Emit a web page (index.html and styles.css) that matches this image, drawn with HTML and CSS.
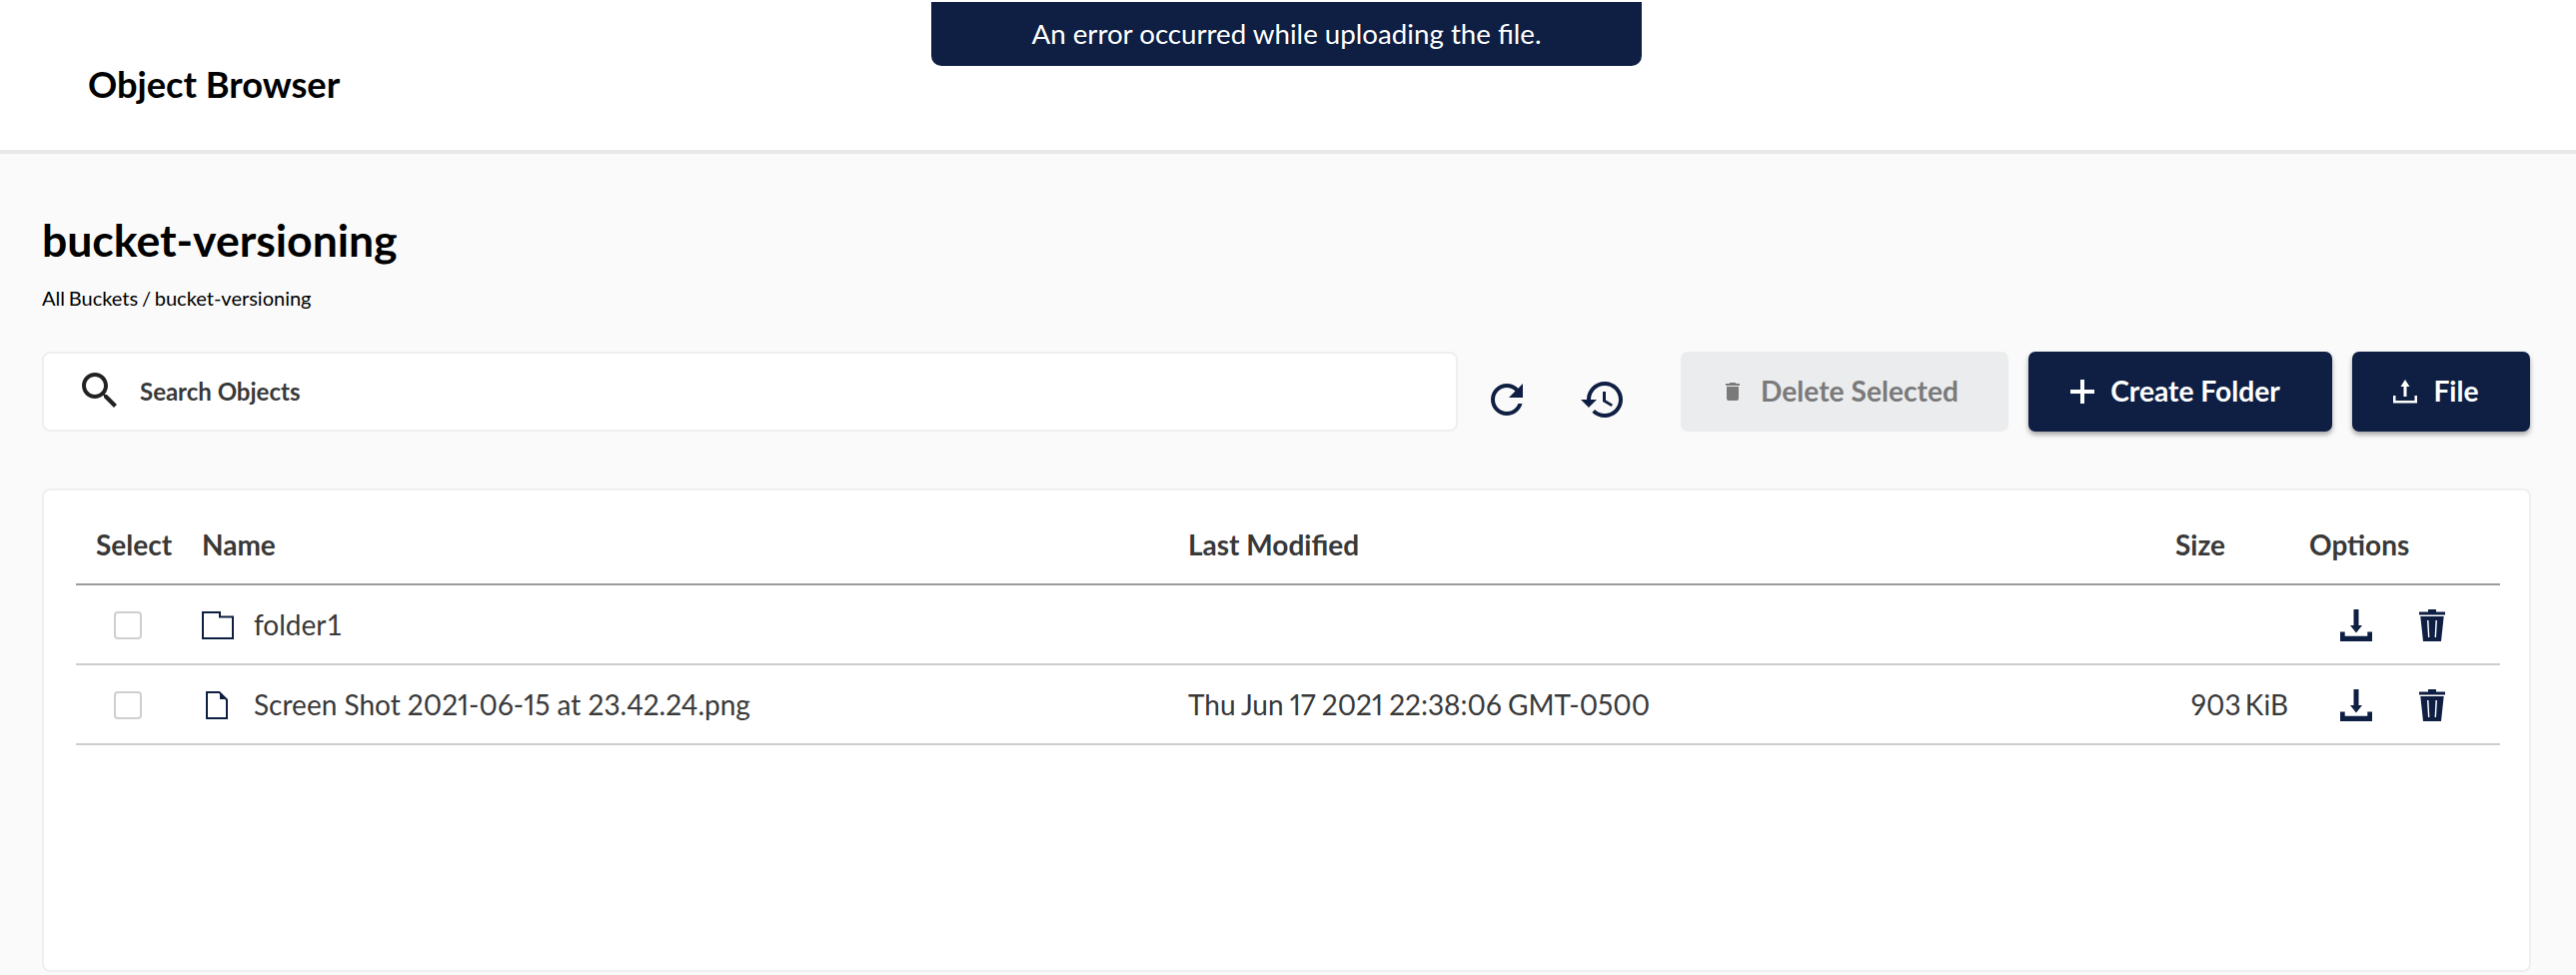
FILE: index.html
```html
<!DOCTYPE html>
<html lang="en">
<head>
    <meta charset="UTF-8">
    <meta name="viewport" content="width=device-width, initial-scale=1.0">
    <title>Object Browser</title>
    <link rel="stylesheet" href="styles.css">
</head>
<body>
    <div class="toast">An error occurred while uploading the file.</div>

    <header class="top-bar">
        <h2 class="page-name">Object Browser</h2>
    </header>

    <main class="content">
        <h1 class="bucket-name">bucket-versioning</h1>
        <div class="breadcrumb">All Buckets / bucket-versioning</div>

        <div class="actions">
            <div class="search">
                <svg class="search-icon" viewBox="0 0 24 24"><path d="M15.5 14h-.79l-.28-.27C15.41 12.59 16 11.11 16 9.5 16 5.91 13.09 3 9.5 3S3 5.91 3 9.5 5.91 16 9.5 16c1.61 0 3.09-.59 4.23-1.57l.27.28v.79l5 4.99L20.49 19l-4.99-5zm-6 0C7.01 14 5 11.99 5 9.5S7.01 5 9.5 5 14 7.01 14 9.5 11.99 14 9.5 14z"/></svg>
                <span>Search Objects</span>
            </div>
            <button class="icon-btn refresh">
                <svg viewBox="0 0 24 24"><path d="M17.65 6.35C16.2 4.9 14.21 4 12 4c-4.42 0-7.99 3.58-7.99 8s3.57 8 7.99 8c3.73 0 6.84-2.55 7.73-6h-2.08c-.82 2.33-3.04 4-5.65 4-3.31 0-6-2.69-6-6s2.69-6 6-6c1.66 0 3.14.69 4.22 1.78L13 11h7V4l-2.35 2.35z"/></svg>
            </button>
            <button class="icon-btn history">
                <svg viewBox="0 0 24 24"><path d="M13 3c-4.97 0-9 4.03-9 9H1l3.89 3.89.07.14L9 12H6c0-3.87 3.13-7 7-7s7 3.13 7 7-3.13 7-7 7c-1.93 0-3.68-.79-4.94-2.06l-1.42 1.42C8.27 19.99 10.51 21 13 21c4.97 0 9-4.03 9-9s-4.03-9-9-9zm-1 5v5l4.28 2.54.72-1.21-3.5-2.08V8H12z"/></svg>
            </button>
            <button class="btn btn-disabled">
                <svg class="btn-icon" viewBox="0 0 24 24"><path d="M6 19c0 1.1.9 2 2 2h8c1.1 0 2-.9 2-2V7H6v12zM19 4h-3.5l-1-1h-5l-1 1H5v2h14V4z"/></svg>
                Delete Selected
            </button>
            <button class="btn btn-folder">
                <svg class="btn-icon" viewBox="0 0 24 24"><path d="M10 0h4v10h10v4H14v10h-4V14H0v-4h10z"/></svg>
                Create Folder
            </button>
            <button class="btn btn-file">
                <svg class="btn-icon" viewBox="0 0 24 24"><path d="M12 0l4.500 7h-3v10h-3V7h-3zM0 16h2.500v5h19v-5H24v7.500H0z"/></svg>
                File
            </button>
        </div>

        <section class="panel">
            <div class="row head">
                <div>Select</div>
                <div>Name</div>
                <div>Last Modified</div>
                <div>Size</div>
                <div>Options</div>
            </div>
            <div class="row">
                <div class="check-cell"><span class="checkbox"></span></div>
                <div class="name-cell folder-name">
                    <span class="type-icon">
                        <svg class="folder-icon" viewBox="0 0 32 28"><path d="M1 1h17v4.500h13V27H1z"/></svg>
                    </span>
                    folder1
                </div>
                <div></div>
                <div class="size-cell"></div>
                <div class="options-cell">
                    <svg class="download-icon" viewBox="0 0 32 32"><path d="M13.500 0h5v16H22l-6 7.500L10 16h3.500zM0 22.500h4.700v4.300h22.600v-4.300H32V32H0z"/></svg>
                    <svg class="trash-icon" viewBox="0 0 26 32"><path d="M9 0h8v2.500h9v3H0v-3h9zM1.300 7h23.400L22 32H4zM8 11l1 17h1.400L9.500 11zM16.500 11l-.9 17H17l1-17z" fill-rule="evenodd"/></svg>
                </div>
            </div>
            <div class="row">
                <div class="check-cell"><span class="checkbox"></span></div>
                <div class="name-cell">
                    <span class="type-icon">
                        <svg class="file-icon" viewBox="0 0 22 28"><path class="outline" d="M1 1h12.500L21 8.500V27H1z"/><path class="fold" d="M14 2v6h6z"/></svg>
                    </span>
                    Screen Shot 2021-06-15 at 23.42.24.png
                </div>
                <div class="date-cell">Thu Jun 17 2021 22:38:06 GMT-0500</div>
                <div class="size-cell">903 KiB</div>
                <div class="options-cell">
                    <svg class="download-icon" viewBox="0 0 32 32"><path d="M13.500 0h5v16H22l-6 7.500L10 16h3.500zM0 22.500h4.700v4.300h22.600v-4.300H32V32H0z"/></svg>
                    <svg class="trash-icon" viewBox="0 0 26 32"><path d="M9 0h8v2.500h9v3H0v-3h9zM1.300 7h23.400L22 32H4zM8 11l1 17h1.400L9.500 11zM16.500 11l-.9 17H17l1-17z" fill-rule="evenodd"/></svg>
                </div>
            </div>
        </section>
    </main>
</body>
</html>
```

FILE: styles.css
```css
* {
    box-sizing: border-box;
}

html, body {
    height: 976px;
    overflow: hidden;
}

body {
    margin: 0;
    font-family: Lato, "Noto Sans", sans-serif;
    font-variant-numeric: proportional-nums;
    background: #fafafa;
    color: #393939;
}

svg {
    display: block;
    fill: #0e1f43;
}

.toast {
    position: absolute;
    top: 2px;
    left: 932px;
    width: 711px;
    height: 64px;
    padding-bottom: 2px;
    display: flex;
    justify-content: center;
    align-items: center;
    background: #0e1f43;
    color: #fff;
    font-size: 27.700px;
    border-radius: 0 0 10px 10px;
}

.top-bar {
    height: 154px;
    padding: 18px 88px 0;
    display: flex;
    align-items: center;
    background: #fff;
    border-bottom: 4px solid #e8e8e8;
}

.page-name {
    margin: 0;
    font-size: 36.200px;
    font-weight: 700;
    color: #000;
}

.content {
    padding: 0 45px 0 42px;
}

.bucket-name {
    margin: 58px 0 0;
    font-size: 44.500px;
    line-height: 56px;
    font-weight: 700;
    color: #000;
}

.breadcrumb {
    margin-top: 18px;
    font-size: 20px;
    line-height: 24px;
    word-spacing: -1.300px;
    color: #000;
}

.actions {
    margin-top: 42px;
    display: flex;
    align-items: center;
    height: 80px;
}

.search {
    width: 1417px;
    height: 80px;
    padding: 0 0 2px 32px;
    display: flex;
    align-items: center;
    gap: 16px;
    background: #fff;
    border: 2px solid #efefef;
    border-radius: 8px;
    font-size: 24px;
    font-weight: 700;
    color: #393939;
}

.search-icon {
    width: 48px;
    height: 48px;
    fill: #222;
}

.icon-btn {
    width: 48px;
    height: 48px;
    margin-top: 16px;
    padding: 0;
    border: none;
    background: none;
}

.icon-btn svg {
    width: 48px;
    height: 48px;
}

.refresh {
    margin-left: 25px;
}

.history {
    margin-left: 48px;
}

.btn {
    height: 80px;
    padding: 0 10px 2px 0;
    display: flex;
    align-items: center;
    justify-content: center;
    border: none;
    border-radius: 7px;
    font-family: inherit;
    font-size: 28.200px;
    font-weight: 700;
    color: #fff;
    background: #0e1f43;
    box-shadow: 0 3px 5px rgba(0, 0, 0, 0.35);
}

.btn svg {
    fill: #fff;
}

.btn-icon {
    width: 24px;
    height: 24px;
    margin: 2px 16px 0 0;
}

.btn-disabled {
    width: 328px;
    margin-left: 54px;
    color: #7a7a7a;
    background: #ebecee;
    box-shadow: none;
}

.btn-disabled svg {
    fill: #7a7a7a;
}

.btn-folder {
    width: 304px;
    margin-left: 20px;
}

.btn-file {
    width: 178px;
    margin-left: 20px;
}

.panel {
    margin-top: 57px;
    height: 484px;
    padding: 0 29px 0 32px;
    background: #fff;
    border: 2px solid #efefef;
    border-radius: 8px;
}

.row {
    display: grid;
    grid-template-columns: 126px 987px 988px 134px 1fr;
    align-items: center;
    height: 80px;
    border-bottom: 2px solid #cdcdcd;
    font-size: 28px;
}

.head {
    height: 95px;
    padding-top: 14px;
    border-bottom-color: #9c9c9c;
    font-weight: 700;
}

.head > div:first-child {
    padding-left: 20px;
}

.check-cell {
    padding: 2px 0 0 38px;
}

.checkbox {
    display: block;
    width: 28px;
    height: 28px;
    border: 2px solid #cfcfcf;
    border-radius: 4px;
}

.name-cell {
    display: flex;
    align-items: center;
}

.folder-name {
    font-variant-numeric: normal;
}

.date-cell {
    word-spacing: -1px;
}

.type-icon {
    width: 52px;
    padding-top: 2px;
}

.folder-icon {
    width: 32px;
    height: 28px;
}

.file-icon {
    width: 22px;
    height: 28px;
    margin-left: 4px;
}

.folder-icon path, .file-icon .outline {
    fill: none;
    stroke: #0e1f43;
    stroke-width: 2;
}

.size-cell {
    padding-right: 21px;
    text-align: right;
    word-spacing: -3px;
}

.options-cell {
    display: flex;
    align-items: center;
    padding: 2px 0 0 31px;
}

.download-icon {
    width: 32px;
    height: 32px;
}

.trash-icon {
    width: 26px;
    height: 32px;
    margin-left: 47px;
}
```
